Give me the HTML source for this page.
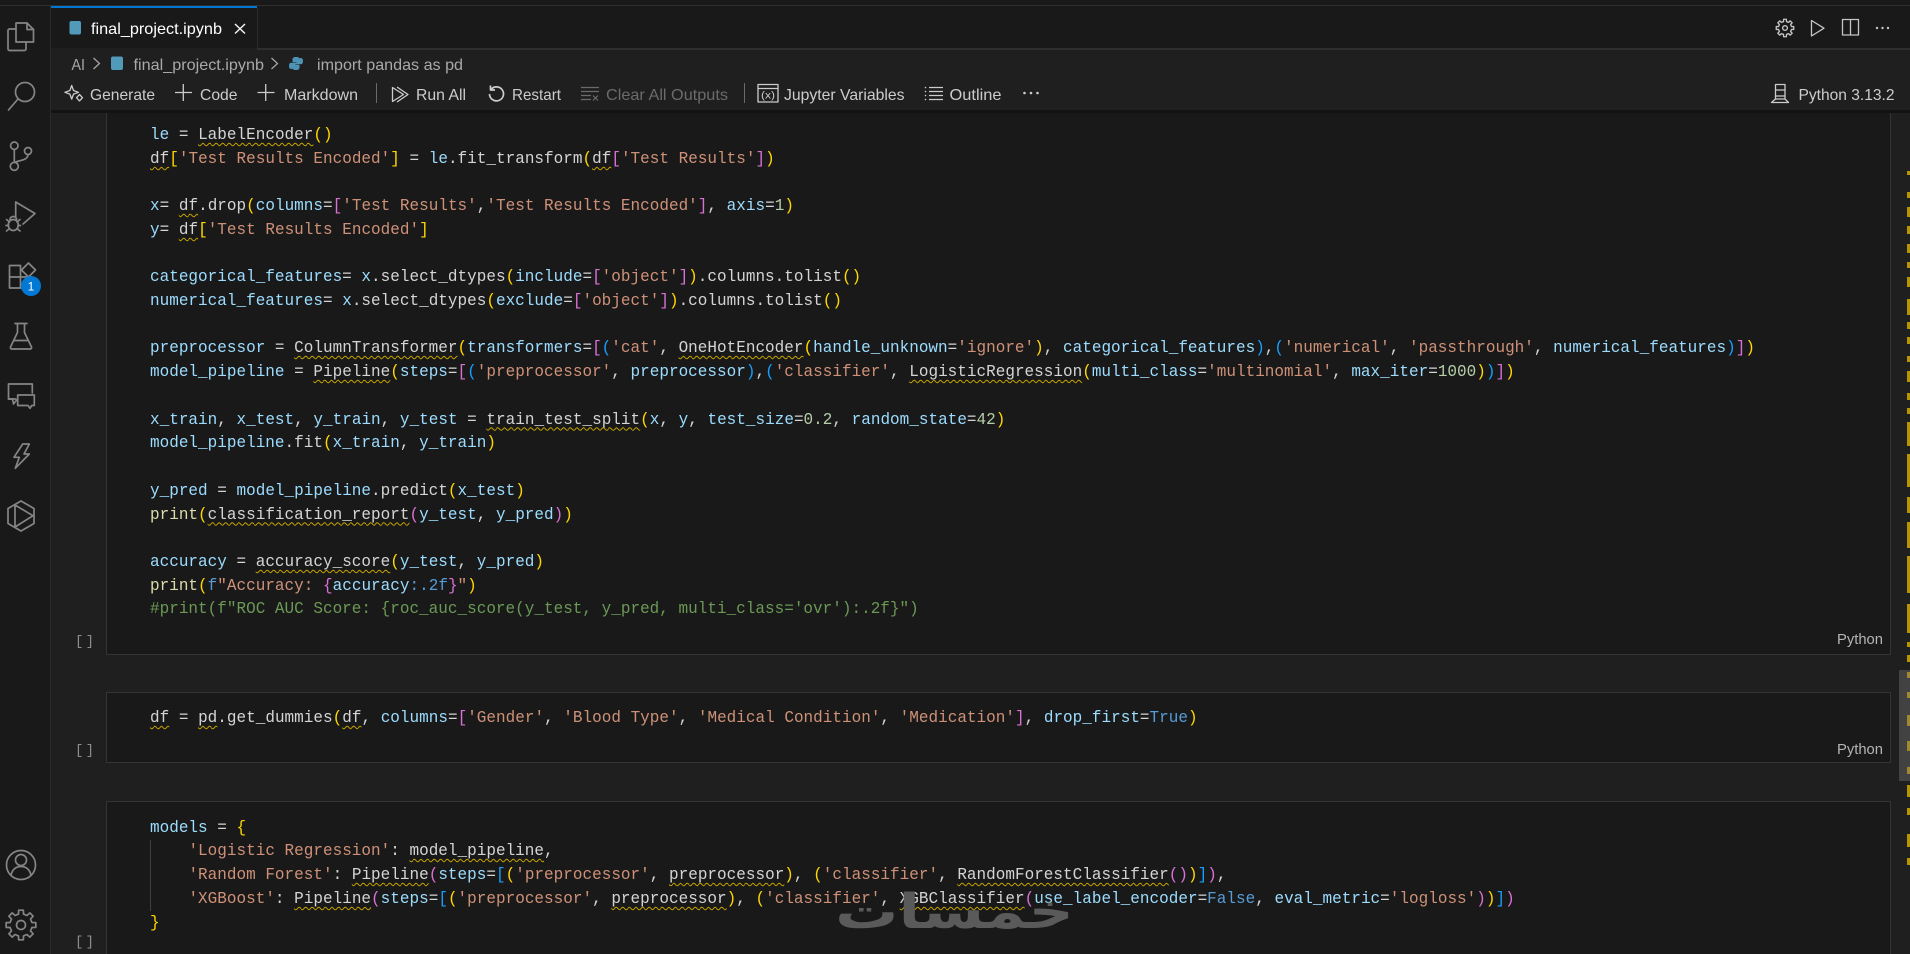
<!DOCTYPE html>
<html><head><meta charset="utf-8"><title>final_project.ipynb</title>
<style>
html,body{margin:0;padding:0;background:#1f1f1f;width:1910px;height:954px;overflow:hidden}
body{position:relative}
.abs,.l,.box{position:absolute}
.box{background:#191919;border:1px solid #343434;box-sizing:border-box}
.l{left:149.5px;white-space:pre;font:17px/24px "Liberation Mono",monospace;color:#d4d4d4;letter-spacing:.01px;transform:scaleX(.941);transform-origin:0 0}
i,b{font-style:normal;font-weight:normal}
.v{color:#9cdcfe}.f{color:#dcdcaa}.s{color:#ce9178}.n{color:#b5cea8}.k{color:#569cd6}.c{color:#6a9955}
.Y{color:#ffd700}.M{color:#da70d6}.B{color:#179fff}
u{text-decoration:underline wavy #c9a500 1px;text-underline-offset:3px;text-decoration-skip-ink:none}
svg{position:absolute;left:0;top:0}
svg text{font-family:"Liberation Sans",sans-serif}
.m{position:absolute;left:1907px;width:3px;background:#b89500}
</style></head><body>

<div class="abs" style="left:0;top:0;width:50px;height:954px;background:#191919"></div>
<div class="abs" style="left:50px;top:0;width:1px;height:954px;background:#2a2a2a"></div>
<div class="abs" style="left:0;top:0;width:1910px;height:5px;background:#191919"></div>
<div class="abs" style="left:0;top:5px;width:1910px;height:1px;background:#2e2e2e"></div>
<div class="abs" style="left:51px;top:6px;width:1859px;height:42px;background:#191919"></div>
<div class="abs" style="left:51px;top:6px;width:206px;height:2px;background:#0078d4"></div>
<div class="abs" style="left:257px;top:8px;width:1px;height:40px;background:#2b2b2b"></div>
<div class="abs" style="left:257px;top:48px;width:1653px;height:2px;background:#2e2e2e"></div>

<div class="box" style="left:106px;top:100px;width:1785px;height:555px"></div>
<div class="box" style="left:106px;top:692px;width:1785px;height:71px"></div>
<div class="box" style="left:106px;top:801px;width:1785px;height:153px;border-bottom:0"></div>
<div class="abs" style="left:51px;top:50px;width:1859px;height:60px;background:#1f1f1f"></div>
<div class="abs" style="left:51px;top:110px;width:1859px;height:3px;background:#131313"></div>

<div class="l" style="top:124px"><i class="v">le</i> = <u>LabelEncoder</u><b class="Y">()</b></div>
<div class="l" style="top:148px"><u>df</u><b class="Y">[</b><i class="s">'Test Results Encoded'</i><b class="Y">]</b> = <i class="v">le</i>.fit_transform<b class="Y">(</b><u>df</u><b class="M">[</b><i class="s">'Test Results'</i><b class="M">]</b><b class="Y">)</b></div>
<div class="l" style="top:195px"><i class="v">x</i>= <u>df</u>.drop<b class="Y">(</b><i class="v">columns</i>=<b class="M">[</b><i class="s">'Test Results'</i>,<i class="s">'Test Results Encoded'</i><b class="M">]</b>, <i class="v">axis</i>=<i class="n">1</i><b class="Y">)</b></div>
<div class="l" style="top:219px"><i class="v">y</i>= <u>df</u><b class="Y">[</b><i class="s">'Test Results Encoded'</i><b class="Y">]</b></div>
<div class="l" style="top:266px"><i class="v">categorical_features</i>= <i class="v">x</i>.select_dtypes<b class="Y">(</b><i class="v">include</i>=<b class="M">[</b><i class="s">'object'</i><b class="M">]</b><b class="Y">)</b>.columns.tolist<b class="Y">()</b></div>
<div class="l" style="top:290px"><i class="v">numerical_features</i>= <i class="v">x</i>.select_dtypes<b class="Y">(</b><i class="v">exclude</i>=<b class="M">[</b><i class="s">'object'</i><b class="M">]</b><b class="Y">)</b>.columns.tolist<b class="Y">()</b></div>
<div class="l" style="top:337px"><i class="v">preprocessor</i> = <u>ColumnTransformer</u><b class="Y">(</b><i class="v">transformers</i>=<b class="M">[</b><b class="B">(</b><i class="s">'cat'</i>, <u>OneHotEncoder</u><b class="Y">(</b><i class="v">handle_unknown</i>=<i class="s">'ignore'</i><b class="Y">)</b>, <i class="v">categorical_features</i><b class="B">)</b>,<b class="B">(</b><i class="s">'numerical'</i>, <i class="s">'passthrough'</i>, <i class="v">numerical_features</i><b class="B">)</b><b class="M">]</b><b class="Y">)</b></div>
<div class="l" style="top:361px"><i class="v">model_pipeline</i> = <u>Pipeline</u><b class="Y">(</b><i class="v">steps</i>=<b class="M">[</b><b class="B">(</b><i class="s">'preprocessor'</i>, <i class="v">preprocessor</i><b class="B">)</b>,<b class="B">(</b><i class="s">'classifier'</i>, <u>LogisticRegression</u><b class="Y">(</b><i class="v">multi_class</i>=<i class="s">'multinomial'</i>, <i class="v">max_iter</i>=<i class="n">1000</i><b class="Y">)</b><b class="B">)</b><b class="M">]</b><b class="Y">)</b></div>
<div class="l" style="top:408.5px"><i class="v">x_train</i>, <i class="v">x_test</i>, <i class="v">y_train</i>, <i class="v">y_test</i> = <u>train_test_split</u><b class="Y">(</b><i class="v">x</i>, <i class="v">y</i>, <i class="v">test_size</i>=<i class="n">0.2</i>, <i class="v">random_state</i>=<i class="n">42</i><b class="Y">)</b></div>
<div class="l" style="top:432px"><i class="v">model_pipeline</i>.fit<b class="Y">(</b><i class="v">x_train</i>, <i class="v">y_train</i><b class="Y">)</b></div>
<div class="l" style="top:479.5px"><i class="v">y_pred</i> = <i class="v">model_pipeline</i>.predict<b class="Y">(</b><i class="v">x_test</i><b class="Y">)</b></div>
<div class="l" style="top:503.5px"><i class="f">print</i><b class="Y">(</b><u>classification_report</u><b class="M">(</b><i class="v">y_test</i>, <i class="v">y_pred</i><b class="M">)</b><b class="Y">)</b></div>
<div class="l" style="top:551px"><i class="v">accuracy</i> = <u>accuracy_score</u><b class="Y">(</b><i class="v">y_test</i>, <i class="v">y_pred</i><b class="Y">)</b></div>
<div class="l" style="top:574.5px"><i class="f">print</i><b class="Y">(</b><i class="k">f</i><i class="s">"Accuracy: </i><b class="M">{</b><i class="v">accuracy</i><i class="k">:.2f</i><b class="M">}</b><i class="s">"</i><b class="Y">)</b></div>
<div class="l c" style="top:598px">#print(f"ROC AUC Score: {roc_auc_score(y_test, y_pred, multi_class='ovr'):.2f}")</div>

<div class="l" style="top:707px"><u>df</u> = <u>pd</u>.get_dummies<b class="Y">(</b><u>df</u>, <i class="v">columns</i>=<b class="M">[</b><i class="s">'Gender'</i>, <i class="s">'Blood Type'</i>, <i class="s">'Medical Condition'</i>, <i class="s">'Medication'</i><b class="M">]</b>, <i class="v">drop_first</i>=<i class="k">True</i><b class="Y">)</b></div>

<div class="abs" style="left:150px;top:840px;width:1px;height:71px;background:#404040"></div>
<div class="l" style="top:816.5px"><i class="v">models</i> = <b class="Y">{</b></div>
<div class="l" style="top:840px">    <i class="s">'Logistic Regression'</i>: <u>model_pipeline</u>,</div>
<div class="l" style="top:864px">    <i class="s">'Random Forest'</i>: <u>Pipeline</u><b class="M">(</b><i class="v">steps</i>=<b class="B">[</b><b class="Y">(</b><i class="s">'preprocessor'</i>, <u>preprocessor</u><b class="Y">)</b>, <b class="Y">(</b><i class="s">'classifier'</i>, <u>RandomForestClassifier</u><b class="M">()</b><b class="Y">)</b><b class="B">]</b><b class="M">)</b>,</div>
<div class="l" style="top:888px">    <i class="s">'XGBoost'</i>: <u>Pipeline</u><b class="M">(</b><i class="v">steps</i>=<b class="B">[</b><b class="Y">(</b><i class="s">'preprocessor'</i>, <u>preprocessor</u><b class="Y">)</b>, <b class="Y">(</b><i class="s">'classifier'</i>, <u>XGBClassifier</u><b class="M">(</b><i class="v">use_label_encoder</i>=<i class="k">False</i>, <i class="v">eval_metric</i>=<i class="s">'logloss'</i><b class="M">)</b><b class="Y">)</b><b class="B">]</b><b class="M">)</b></div>
<div class="l" style="top:912px"><b class="Y">}</b></div>

<div class="m" style="top:171px;height:4px"></div><div class="m" style="top:192px;height:6px"></div><div class="m" style="top:207px;height:10px"></div><div class="m" style="top:226px;height:8px"></div><div class="m" style="top:244px;height:9px"></div><div class="m" style="top:262px;height:6px"></div><div class="m" style="top:277px;height:10px"></div><div class="m" style="top:299px;height:16px"></div><div class="m" style="top:322px;height:7px"></div><div class="m" style="top:337px;height:7px"></div><div class="m" style="top:356px;height:6px"></div><div class="m" style="top:371px;height:11px"></div><div class="m" style="top:393px;height:7px"></div><div class="m" style="top:408px;height:6px"></div><div class="m" style="top:422px;height:24px"></div><div class="m" style="top:454px;height:33px"></div><div class="m" style="top:497px;height:16px"></div><div class="m" style="top:522px;height:26px"></div><div class="m" style="top:556px;height:37px"></div><div class="m" style="top:604px;height:29px"></div><div class="m" style="top:642px;height:5px"></div><div class="m" style="top:655px;height:7px"></div><div class="m" style="top:672px;height:6px"></div><div class="m" style="top:692px;height:6px"></div><div class="m" style="top:715px;height:11px"></div><div class="m" style="top:741px;height:10px"></div><div class="m" style="top:767px;height:7px"></div><div class="m" style="top:785px;height:12px"></div><div class="m" style="top:808px;height:7px"></div><div class="m" style="top:834px;height:13px"></div><div class="m" style="top:858px;height:7px"></div>
<div class="abs" style="left:1899px;top:670px;width:11px;height:111px;background:rgba(121,121,121,.4)"></div>

<svg width="1910" height="954" viewBox="0 0 1910 954" fill="none">
<!-- activity bar -->
<g stroke="#858585" stroke-width="1.7" stroke-linejoin="round" stroke-linecap="round">
<path d="M16 23h11l6.5 6.5V42h-17.5z"/><path d="M27 23v6.5h6.5"/>
<path d="M16 29h-6.5a1.5 1.5 0 0 0-1.5 1.5V49a1.5 1.5 0 0 0 1.5 1.5h15a1.5 1.5 0 0 0 1.5-1.5v-7"/>
<circle cx="25" cy="92" r="9.5"/><path d="M18 99l-9.5 11"/>
<circle cx="14.3" cy="145.7" r="3.7"/><circle cx="14.3" cy="166.3" r="4"/><circle cx="28" cy="151" r="3.5"/>
<path d="M14.3 149.4v13"/><path d="M28 154.5c0 4.500-5 5.500-9 6.500-2 .5-3.500 1-4.700 1.500"/>
<path d="M15.700 217V202L35 213.500 23 224"/>
<ellipse cx="13.300" cy="225" rx="5" ry="5.500"/><path d="M10 219.500a3.300 3 0 0 1 6.600 0M6.500 219.500l3 2.500M20 219.500l-3 2.500M6 225.500h2.500M18 225.500h2.500M6.500 231l3-2.500M20 231l-3-2.500"/>
<path d="M9.500 265.500H20.500V288H9.500zM9.500 277H32V288H20.500"/><path d="M28.500 263l7 7-7 7-7-7z"/>
<path d="M15 323.500h12M17.500 323.500v9L10.500 347a1.500 1.500 0 0 0 1 2h19a1.500 1.500 0 0 0 1-2L24.500 332.500v-9M14.500 340.500h13"/>
<path d="M15.500 399H8.500V384H32.300V393"/><path d="M8.500 399h4l1 5 4-5"/><path d="M17.700 395H34.300V405.500H31.700L30 408.300 28 405.500H17.700z"/>
<path d="M22.700 444H29.300L24 454H29.300L15.300 468.300 19.300 457.300H14z"/>
<path d="M21 501L34 508.500V523.500L21 531 8 523.500V508.500z"/><path d="M15 505L33 515.700 15 527z"/>
<circle cx="21" cy="865" r="14.500"/><circle cx="21" cy="860" r="5.500"/><path d="M11 875.500c1-6 5-9 10-9s9 3 10 9"/>
<g transform="translate(21 925)"><path d="M-2.520-10.910L-2.350-14.820 2.350-14.820 2.520-10.910 5.940-9.500 8.820-12.140 12.140-8.820 9.500-5.940 10.910-2.520 14.820-2.350 14.820 2.350 10.910 2.520 9.500 5.940 12.140 8.820 8.820 12.140 5.940 9.500 2.520 10.910 2.350 14.820-2.350 14.820-2.520 10.910-5.940 9.500-8.820 12.140-12.140 8.820-9.500 5.940-10.910 2.520-14.820 2.350-14.820-2.350-10.910-2.520-9.500-5.940-12.140-8.820-8.820-12.140-5.940-9.500z"/><circle r="4.500"/></g>
</g>
<circle cx="31" cy="286" r="10" fill="#0078d4"/>
<text x="31" y="290.500" fill="#fff" font-size="12" text-anchor="middle">1</text>

<!-- tab -->
<rect x="69.500" y="21" width="11.500" height="13.500" rx="2" fill="#519aba"/>
<text x="91" y="34" fill="#ffffff" font-size="16" textLength="131" lengthAdjust="spacingAndGlyphs">final_project.ipynb</text>
<path d="M235 24l10 9.500M245 24l-10 9.500" stroke="#f0f0f0" stroke-width="1.500"/>

<!-- top right actions -->
<g stroke="#c5c5c5" stroke-width="1.300" stroke-linejoin="round">
<g transform="translate(1785 28) scale(.59)" stroke-width="2.300"><path d="M-2.520-10.910L-2.350-14.820 2.350-14.820 2.520-10.910 5.940-9.500 8.820-12.140 12.140-8.820 9.500-5.940 10.910-2.520 14.820-2.350 14.820 2.350 10.910 2.520 9.500 5.940 12.140 8.820 8.820 12.140 5.940 9.500 2.520 10.910 2.350 14.820-2.350 14.820-2.520 10.910-5.940 9.500-8.820 12.140-12.140 8.820-9.500 5.940-10.910 2.520-14.820 2.350-14.820-2.350-10.910-2.520-9.500-5.940-12.140-8.820-8.820-12.140-5.940-9.500z"/><circle r="4"/></g>
<path d="M1811.500 20.500V36L1824 28.200z"/>
<path d="M1842.500 19.500h16v15.500h-16zM1850.500 19.500V35"/>
</g>
<g fill="#c5c5c5"><circle cx="1877" cy="28" r="1.200"/><circle cx="1882.500" cy="28" r="1.200"/><circle cx="1888" cy="28" r="1.200"/></g>

<!-- breadcrumbs -->
<text x="71.500" y="70" fill="#a9a9a9" font-size="16" textLength="13.500" lengthAdjust="spacingAndGlyphs">AI</text>
<path d="M93.500 58l6 5.500-6 5.500M271.500 58l6 5.500-6 5.500" stroke="#a9a9a9" stroke-width="1.200"/>
<rect x="111" y="56.500" width="12" height="13.500" rx="2" fill="#519aba"/>
<text x="133.500" y="70" fill="#a9a9a9" font-size="16" textLength="130.500" lengthAdjust="spacingAndGlyphs">final_project.ipynb</text>
<g fill="#4d93b5"><path d="M296 57c-2.700 0-3.500 1-3.500 2.500V62h4v.8H291c-1.500 0-2 1.700-2 3.200 0 1.500.6 3 2 3h1V67c0-1.500 1-2.500 2.500-2.500h3.500c1.200 0 2-.8 2-2v-3c0-1.500-1.200-2.500-4-2.500z"/>
<path transform="rotate(180 296 63.500)" d="M296 57c-2.700 0-3.500 1-3.500 2.500V62h4v.8H291c-1.500 0-2 1.700-2 3.200 0 1.500.6 3 2 3h1V67c0-1.500 1-2.500 2.500-2.500h3.500c1.200 0 2-.8 2-2v-3c0-1.500-1.200-2.500-4-2.500z"/></g>
<text x="317" y="70" fill="#a9a9a9" font-size="16" textLength="146" lengthAdjust="spacingAndGlyphs">import pandas as pd</text>

<!-- toolbar -->
<g stroke="#cccccc" stroke-width="1.300" stroke-linejoin="round">
<path d="M71.700 85.500l1.800 5 5 1.800-5 1.800-1.800 5-1.800-5-5-1.800 5-1.800z"/><path d="M79.500 94.500l3 3.200-3 3.200-3-3.200z"/>
<path d="M183.300 84v17M175 92.500h17M265.700 84v17M257.500 92.500h17"/>
<path d="M392.500 87.500V101.500L403.500 94.500z"/><path d="M397 87L408 94.500 397 102"/>
<path d="M491.200 89.300A7 7 0 1 1 489.500 94" stroke-width="1.700"/><path d="M490.500 85.500V90H495" stroke-width="1.700"/>
<rect x="758" y="84.500" width="20" height="17.500"/><path d="M758 88.500h20"/>
<path d="M929 87.500h14M929 91.500h14M929 95.500h14M929 99.500h14"/>
<path d="M1775.500 99V84.500h9.500V99M1775.500 99L1771.500 102.500H1788.500L1785 99zM1775.500 90h9.500M1775.500 96h9.500"/>
</g>
<path d="M376.500 83v20M744.500 83v20" stroke="#6a6a6a"/>
<g fill="#ccc"><circle cx="925.500" cy="87.500" r=".8"/><circle cx="925.500" cy="91.500" r=".8"/><circle cx="925.500" cy="95.500" r=".8"/><circle cx="925.500" cy="99.500" r=".8"/>
<circle cx="1024.500" cy="93" r="1.300"/><circle cx="1031" cy="93" r="1.300"/><circle cx="1037.500" cy="93" r="1.300"/></g>
<path d="M581 87.500h18M581 91.500h18M581 95.500h10M581 99.500h10M593 95.500l5 5M598 95.500l-5 5" stroke="#6b6b6b" stroke-width="1.200"/>
<g fill="#cccccc" font-size="15.600">
<text x="90" y="100" textLength="65" lengthAdjust="spacingAndGlyphs">Generate</text>
<text x="200" y="100" textLength="37.500" lengthAdjust="spacingAndGlyphs">Code</text>
<text x="284" y="100" textLength="74" lengthAdjust="spacingAndGlyphs">Markdown</text>
<text x="416" y="100" textLength="50" lengthAdjust="spacingAndGlyphs">Run All</text>
<text x="512" y="100" textLength="49" lengthAdjust="spacingAndGlyphs">Restart</text>
<text x="606" y="100" fill="#6b6b6b" textLength="122" lengthAdjust="spacingAndGlyphs">Clear All Outputs</text>
<text x="784" y="100" textLength="120.500" lengthAdjust="spacingAndGlyphs">Jupyter Variables</text>
<text x="949.500" y="100" textLength="52" lengthAdjust="spacingAndGlyphs">Outline</text>
<text x="1798.500" y="100" textLength="96" lengthAdjust="spacingAndGlyphs">Python 3.13.2</text>
<text x="761" y="98.500" font-size="10" textLength="14" lengthAdjust="spacingAndGlyphs">(x)</text>
</g>

<!-- cell gutters and labels -->
<g fill="#8c8c8c" font-size="14">
<text x="75" y="645" style="font-family:'Liberation Mono',monospace" textLength="19">[ ]</text>
<text x="75" y="754" style="font-family:'Liberation Mono',monospace" textLength="19">[ ]</text>
<text x="75" y="945.500" style="font-family:'Liberation Mono',monospace" textLength="19">[ ]</text>
</g>
<g fill="#b4b4b4" font-size="14.500">
<text x="1837" y="644" textLength="46" lengthAdjust="spacingAndGlyphs">Python</text>
<text x="1837" y="754" textLength="46" lengthAdjust="spacingAndGlyphs">Python</text>
</g>
</svg>

<div class="abs" style="left:840px;top:882px;width:229px;height:60px;text-align:center;font:bold 60px/60px 'DejaVu Sans','Noto Sans CJK SC',sans-serif;color:#5a5a5a;white-space:nowrap;transform-origin:center;transform:scale(1.05,.8)" dir="rtl">خمسات</div>
</body></html>
